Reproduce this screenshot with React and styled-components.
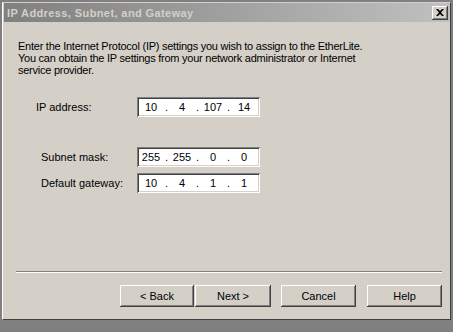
import React from 'react'
import styled, { createGlobalStyle } from 'styled-components'

const GlobalStyle = createGlobalStyle`
    html, body {
        margin: 0;
        padding: 0;
        background: #808080;
    }
    body {
        font-family: 'Liberation Sans', Arial, sans-serif;
        font-size: 11px;
        color: #000000;
    }
`

const Screen = styled.div`
    width: 453px;
    height: 332px;
    background: #808080;
    padding: 2px 2px 0 2px;
    box-sizing: border-box;
    overflow: hidden;
`

const Window = styled.div`
    width: 449px;
    height: 318px;
    box-sizing: border-box;
    background: #d4d0c8;
    border-top: 1px solid #d4d0c8;
    border-left: 1px solid #ffffff;
    border-right: 1px solid #404040;
    border-bottom: 1px solid #404040;
    display: flex;
    flex-direction: column;
`

const TitleBar = styled.div`
    height: 19px;
    margin-left: 1px;
    display: flex;
    align-items: center;
    justify-content: space-between;
    padding: 0 2px 0 3px;
    background: linear-gradient(to right, #808080, #c0c0c0);
`

const Title = styled.span`
    color: #d4d0c8;
    font-weight: bold;
    font-size: 11px;
    letter-spacing: 0.4px;
    font-family: 'Liberation Sans', Arial, sans-serif;
`

const CloseButton = styled.div`
    width: 16px;
    height: 14px;
    box-sizing: border-box;
    background: #d4d0c8;
    display: flex;
    align-items: center;
    justify-content: center;
    box-shadow: inset -1px -1px #404040, inset 1px 1px #ffffff,
        inset -2px -2px #808080;
`

const Body = styled.div`
    flex: 1;
    display: flex;
    flex-direction: column;
    padding: 18px 8px 12px 13px;
`

const Intro = styled.p`
    margin: 0 0 0 2px;
    line-height: 12px;
    letter-spacing: -0.25px;
    white-space: nowrap;
`

const Fields = styled.div`
    display: flex;
    flex-direction: column;
    margin: 21px 0 0 20px;
`

const Row = styled.div`
    display: flex;
    align-items: center;
    margin-top: ${(p) => p.gap || 0}px;
`

const Label = styled.span`
    width: ${(p) => 101 - (p.indent || 0)}px;
    padding-left: ${(p) => p.indent || 0}px;
`

const IpBox = styled.div`
    width: 123px;
    height: 20px;
    box-sizing: border-box;
    background: #ffffff;
    display: grid;
    grid-template-columns: 24px 7px 24px 7px 24px 7px 24px;
    align-items: center;
    padding-left: 2px;
    box-shadow: inset 1px 1px #808080, inset -1px -1px #ffffff,
        inset 2px 2px #404040, inset -2px -2px #d4d0c8;
`

const Octet = styled.span`
    text-align: center;
`

const Dot = styled.span`
    text-align: center;
`

const Spacer = styled.div`
    flex: 1;
`

const Separator = styled.div`
    height: 0;
    border-top: 1px solid #808080;
    border-bottom: 1px solid #ffffff;
`

const ButtonRow = styled.div`
    display: flex;
    justify-content: flex-end;
    margin-top: 12px;
`

const Button = styled.div`
    width: ${(p) => p.w || 75}px;
    height: 22px;
    box-sizing: border-box;
    display: flex;
    align-items: center;
    justify-content: center;
    margin-left: ${(p) => p.gap || 0}px;
    background: #d4d0c8;
    box-shadow: inset -1px -1px #404040, inset 1px 1px #ffffff,
        inset -2px -2px #808080;
`

function IpAddress({ value }) {
    const parts = value.split('.')
    return (
        <IpBox>
            {parts.map((part, i) => (
                <React.Fragment key={i}>
                    {i > 0 && <Dot>.</Dot>}
                    <Octet>{part}</Octet>
                </React.Fragment>
            ))}
        </IpBox>
    )
}

export default function App() {
    return (
        <Screen>
            <GlobalStyle />
            <Window>
                <TitleBar>
                    <Title>IP Address, Subnet, and Gateway</Title>
                    <CloseButton>
                        <svg width="8" height="7" viewBox="0 0 8 7">
                            <path
                                d="M0 0h2l2 2 2-2h2L5 3.5 8 7H6L4 5 2 7H0l3-3.5z"
                                fill="#000"
                            />
                        </svg>
                    </CloseButton>
                </TitleBar>
                <Body>
                    <Intro>
                        Enter the Internet Protocol (IP) settings you wish to assign to the EtherLite.
                        <br />
                        You can obtain the IP settings from your network administrator or Internet
                        <br />
                        service provider.
                    </Intro>
                    <Fields>
                        <Row>
                            <Label>IP address:</Label>
                            <IpAddress value="10.4.107.14" />
                        </Row>
                        <Row gap={30}>
                            <Label indent={5}>Subnet mask:</Label>
                            <IpAddress value="255.255.0.0" />
                        </Row>
                        <Row gap={6}>
                            <Label indent={5}>Default gateway:</Label>
                            <IpAddress value="10.4.1.1" />
                        </Row>
                    </Fields>
                    <Spacer />
                    <Separator />
                    <ButtonRow>
                        <Button w={74}>&lt; Back</Button>
                        <Button w={76} gap={1}>Next &gt;</Button>
                        <Button gap={10}>Cancel</Button>
                        <Button gap={11}>Help</Button>
                    </ButtonRow>
                </Body>
            </Window>
        </Screen>
    )
}
